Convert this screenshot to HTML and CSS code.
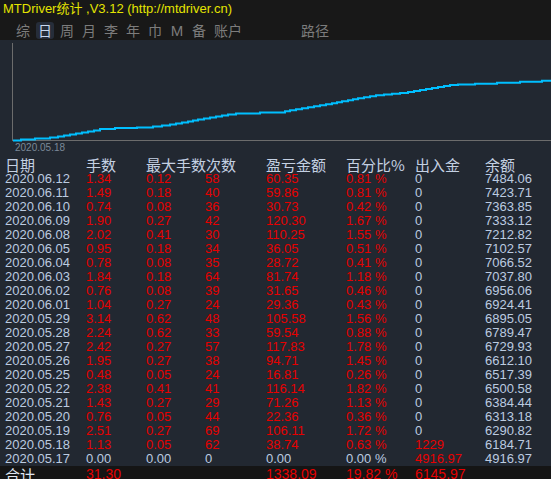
FILE: index.html
```html
<!DOCTYPE html>
<html>
<head>
<meta charset="utf-8">
<link rel="stylesheet" href="styles.css">
</head>
<body>
<div class="top">
  <div class="title">MTDriver统计 ,V3.12 (http://mtdriver.cn)</div>
  <nav class="tabs">
    <span class="tab">综</span>
    <span class="tab active">日</span>
    <span class="tab">周</span>
    <span class="tab">月</span>
    <span class="tab">李</span>
    <span class="tab">年</span>
    <span class="tab">巾</span>
    <span class="tab latin">M</span>
    <span class="tab">备</span>
    <span class="tab wide">账户</span>
    <span class="tab wide far">路径</span>
  </nav>
</div>
<div class="chart">
  <svg class="plot" width="551" height="117" viewBox="0 40 551 117">
    <line x1="12.5" y1="43" x2="12.5" y2="140.5" stroke="#6c6c6c" stroke-width="1"/>
    <line x1="12" y1="140.5" x2="551" y2="140.5" stroke="#6c6c6c" stroke-width="1"/>
    <path fill="none" stroke="#00bfff" stroke-width="2" d="M13 140.5 H21 V139.5 H35 V138.5 H50 V137.5 H58 V136.5 H64 V135.5 H70 V134.5 H76 V133.5 H82 V132.5 H88 V131.5 H94 V130.5 H100 V129 H115 V128 H137 V127.5 H153 V126.5 H162 V125.5 H170 V124.5 H176 V123.5 H182 V122.5 H188 V121.5 H193 V120.5 H198 V119.5 H204 V118.5 H210 V117.5 H216 V116.5 H222 V115.5 H228 V114.5 H236 V113.5 H260 V112.5 H285 V111.3 H290 V110.3 H296 V109.3 H302 V108.3 H308 V107.3 H314 V106.3 H320 V105.3 H326 V104.3 H332 V103.3 H337 V102.3 H342 V101.3 H348 V100.3 H353 V99.3 H358 V98.3 H364 V97.3 H370 V96.3 H376 V95.3 H384 V94.5 H392 V93.7 H400 V93 H408 V92 H414 V91 H420 V90 H426 V89 H432 V88 H438 V87 H444 V86 H450 V85 H458 V84.5 H475 V83.7 H497 V82.7 H520 V81.7 H542 V80.7 H551"/>
    <text x="15" y="151" class="axis-label">2020.05.18</text>
  </svg>
</div>
<div class="table">
  <div class="row head">
    <span>日期</span><span>手数</span><span class="span2">最大手数次数</span><span>盈亏金额</span><span>百分比%</span><span>出入金</span><span>余额</span>
  </div>
  <div class="row"><span>2020.06.12</span><span class="r">1.34</span><span class="r">0.12</span><span class="r">58</span><span class="r">60.35</span><span class="r">0.81 %</span><span>0</span><span>7484.06</span></div>
  <div class="row"><span>2020.06.11</span><span class="r">1.49</span><span class="r">0.18</span><span class="r">40</span><span class="r">59.86</span><span class="r">0.81 %</span><span>0</span><span>7423.71</span></div>
  <div class="row"><span>2020.06.10</span><span class="r">0.74</span><span class="r">0.08</span><span class="r">36</span><span class="r">30.73</span><span class="r">0.42 %</span><span>0</span><span>7363.85</span></div>
  <div class="row"><span>2020.06.09</span><span class="r">1.90</span><span class="r">0.27</span><span class="r">42</span><span class="r">120.30</span><span class="r">1.67 %</span><span>0</span><span>7333.12</span></div>
  <div class="row"><span>2020.06.08</span><span class="r">2.02</span><span class="r">0.41</span><span class="r">30</span><span class="r">110.25</span><span class="r">1.55 %</span><span>0</span><span>7212.82</span></div>
  <div class="row"><span>2020.06.05</span><span class="r">0.95</span><span class="r">0.18</span><span class="r">34</span><span class="r">36.05</span><span class="r">0.51 %</span><span>0</span><span>7102.57</span></div>
  <div class="row"><span>2020.06.04</span><span class="r">0.78</span><span class="r">0.08</span><span class="r">35</span><span class="r">28.72</span><span class="r">0.41 %</span><span>0</span><span>7066.52</span></div>
  <div class="row"><span>2020.06.03</span><span class="r">1.84</span><span class="r">0.18</span><span class="r">64</span><span class="r">81.74</span><span class="r">1.18 %</span><span>0</span><span>7037.80</span></div>
  <div class="row"><span>2020.06.02</span><span class="r">0.76</span><span class="r">0.08</span><span class="r">39</span><span class="r">31.65</span><span class="r">0.46 %</span><span>0</span><span>6956.06</span></div>
  <div class="row"><span>2020.06.01</span><span class="r">1.04</span><span class="r">0.27</span><span class="r">24</span><span class="r">29.36</span><span class="r">0.43 %</span><span>0</span><span>6924.41</span></div>
  <div class="row"><span>2020.05.29</span><span class="r">3.14</span><span class="r">0.62</span><span class="r">48</span><span class="r">105.58</span><span class="r">1.56 %</span><span>0</span><span>6895.05</span></div>
  <div class="row"><span>2020.05.28</span><span class="r">2.24</span><span class="r">0.62</span><span class="r">33</span><span class="r">59.54</span><span class="r">0.88 %</span><span>0</span><span>6789.47</span></div>
  <div class="row"><span>2020.05.27</span><span class="r">2.42</span><span class="r">0.27</span><span class="r">57</span><span class="r">117.83</span><span class="r">1.78 %</span><span>0</span><span>6729.93</span></div>
  <div class="row"><span>2020.05.26</span><span class="r">1.95</span><span class="r">0.27</span><span class="r">38</span><span class="r">94.71</span><span class="r">1.45 %</span><span>0</span><span>6612.10</span></div>
  <div class="row"><span>2020.05.25</span><span class="r">0.48</span><span class="r">0.05</span><span class="r">24</span><span class="r">16.81</span><span class="r">0.26 %</span><span>0</span><span>6517.39</span></div>
  <div class="row"><span>2020.05.22</span><span class="r">2.38</span><span class="r">0.41</span><span class="r">41</span><span class="r">116.14</span><span class="r">1.82 %</span><span>0</span><span>6500.58</span></div>
  <div class="row"><span>2020.05.21</span><span class="r">1.43</span><span class="r">0.27</span><span class="r">29</span><span class="r">71.26</span><span class="r">1.13 %</span><span>0</span><span>6384.44</span></div>
  <div class="row"><span>2020.05.20</span><span class="r">0.76</span><span class="r">0.05</span><span class="r">44</span><span class="r">22.36</span><span class="r">0.36 %</span><span>0</span><span>6313.18</span></div>
  <div class="row"><span>2020.05.19</span><span class="r">2.51</span><span class="r">0.27</span><span class="r">69</span><span class="r">106.11</span><span class="r">1.72 %</span><span>0</span><span>6290.82</span></div>
  <div class="row"><span>2020.05.18</span><span class="r">1.13</span><span class="r">0.05</span><span class="r">62</span><span class="r">38.74</span><span class="r">0.63 %</span><span class="r">1229</span><span>6184.71</span></div>
  <div class="row"><span>2020.05.17</span><span>0.00</span><span>0.00</span><span>0</span><span>0.00</span><span>0.00 %</span><span class="r">4916.97</span><span>4916.97</span></div>
  <div class="row total"><span class="label">合计</span><span class="r">31.30</span><span></span><span></span><span class="r">1338.09</span><span class="r">19.82 %</span><span class="r">6145.97</span><span></span></div>
</div>
</body>
</html>
```
FILE: styles.css
```css
html, body {
  margin: 0;
  padding: 0;
  background: #222831;
  width: 551px;
  height: 479px;
  overflow: hidden;
  font-family: "Liberation Sans", Arial, "Noto Sans CJK SC", sans-serif;
}
.top {
  background: #181818;
  height: 40px;
}
.title {
  height: 20px;
  line-height: 18px;
  padding-left: 3px;
  font-size: 13px;
  color: #e4e400;
  font-family: "Liberation Sans", Arial, "Noto Sans CJK SC", sans-serif;
  white-space: nowrap;
}
.tabs {
  display: flex;
  gap: 4px;
  padding: 2px 0 0 14px;
  height: 18px;
}
.tab {
  width: 18px;
  height: 17px;
  line-height: 17px;
  text-align: center;
  font-size: 14px;
  color: #7c7c7c;
  font-family: "Noto Sans CJK SC", sans-serif;
  border-radius: 3px;
}
.tab.latin {
  font-family: "Liberation Sans", Arial, sans-serif;
  font-size: 15px;
}
.tab.wide {
  width: 32px;
}
.tab.far {
  margin-left: 51px;
}
.tab.active {
  background: #262d39;
  color: #c8d8f0;
}
.chart {
  height: 117px;
}
.plot {
  display: block;
}
.axis-label {
  font-family: "Liberation Sans", Arial, sans-serif;
  font-size: 10px;
  fill: #7b8898;
}
.table {
  display: flex;
  flex-direction: column;
}
.row {
  display: grid;
  grid-template-columns: 81px 60px 59px 61px 80px 69px 70px 1fr;
  padding-left: 5px;
  height: 14px;
  line-height: 14px;
  font-size: 13px;
  color: #bccbe0;
  white-space: nowrap;
}
.row .r {
  color: #e60000;
}
.row.head {
  height: 15px;
  line-height: 15px;
  font-size: 15px;
  color: #c4d0e2;
  font-family: "Noto Sans CJK SC", sans-serif;
}
.row.head .span2 {
  grid-column: span 2;
}
.row.total {
  background: #151515;
  height: 16px;
  line-height: 17px;
  font-size: 14px;
}
.row.total .label {
  font-family: "Noto Sans CJK SC", sans-serif;
  font-size: 15px;
  color: #e0e6f0;
}
```
